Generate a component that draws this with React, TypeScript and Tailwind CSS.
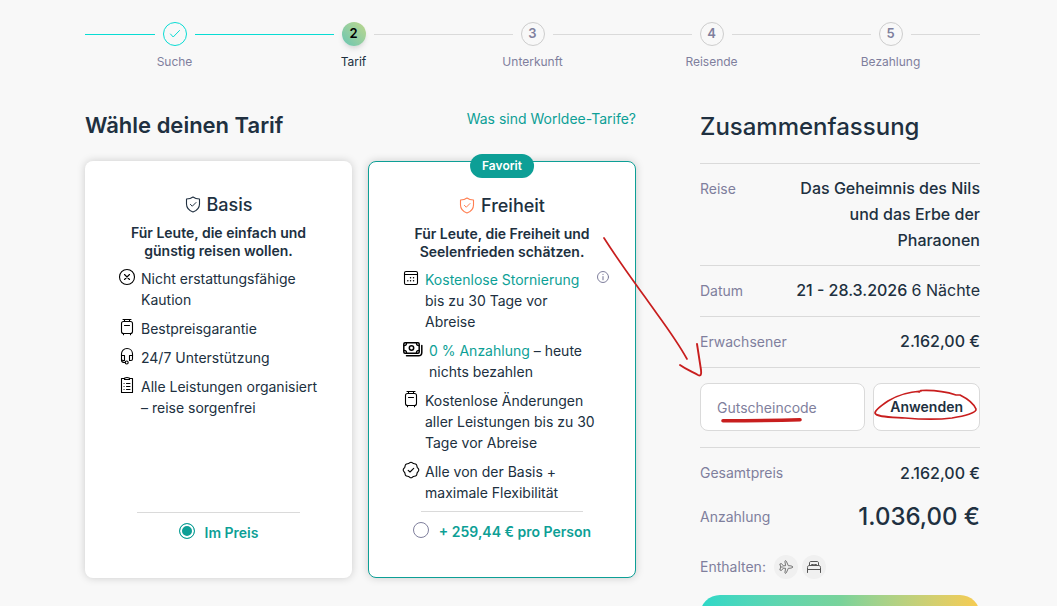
import { useState } from "react";
import type { ReactNode } from "react";

type IconProps = { children: ReactNode; className?: string; w?: number; h?: number };

function Icon({ children, className = "", w = 18, h = 18 }: IconProps) {
  return (
    <svg
      width={w}
      height={h}
      viewBox={`0 0 ${w} ${h}`}
      fill="none"
      stroke="currentColor"
      strokeWidth="1.1"
      strokeLinecap="round"
      strokeLinejoin="round"
      aria-hidden="true"
      className={`shrink-0 ${className}`}
    >
      {children}
    </svg>
  );
}

const ShieldIcon = ({ className }: { className: string }) => (
  <Icon w={16} h={18} className={className}>
    <path d="M8 1C6.2 2.4 3.8 3 1.5 3V8C1.5 12.1 4.2 14.6 8 16C11.8 14.6 14.5 12.1 14.5 8V3C12.2 3 9.8 2.4 8 1Z" strokeWidth="1.1" />
    <path d="M5.4 8.4L7.3 10.2L11 6.5" strokeWidth="1" />
  </Icon>
);

const CircleXIcon = () => (
  <Icon>
    <circle cx="9" cy="9" r="7.5" />
    <path d="M6.5 6.5L11.5 11.5M11.5 6.5L6.5 11.5" />
  </Icon>
);

const SuitcaseIcon = () => (
  <Icon>
    <path d="M5 1.5H13M6.5 1.5V3.5M11.5 1.5V3.5" />
    <rect x="3.5" y="3.5" width="11" height="12" rx="2" />
    <path d="M6.5 7.5H11.5M5.5 15.5V16.7M12.5 15.5V16.7" />
  </Icon>
);

const HeadsetIcon = () => (
  <Icon>
    <path d="M3.5 9V6.8C3.5 3.8 5.8 1.5 9 1.5S14.5 3.8 14.5 6.8V9" />
    <path d="M3.5 8.5H6.5V13.5H5C4 13.5 3.5 13 3.5 12ZM14.5 8.5H11.5V13.5H13C14 13.5 14.5 13 14.5 12Z" />
    <path d="M3.5 12V13.5C3.5 15 4.5 15.5 7 15.5" />
    <circle cx="8.7" cy="15.5" r="1.5" />
  </Icon>
);

const ClipboardIcon = () => (
  <Icon>
    <path d="M6.5 2.5H3.5V16.5H14.5V2.5H11.5" />
    <path d="M6.5 3.5V2.5C6.5 1.5 7 1.5 9 1.5S11.5 1.5 11.5 2.5V3.5Z" />
    <path d="M8.5 7.5H12M8.5 10.5H12M8.5 13.5H12M6 7.5H6.1M6 10.5H6.1M6 13.5H6.1" />
  </Icon>
);

const CalendarIcon = () => (
  <Icon>
    <rect x="2.5" y="2.5" width="13" height="13" rx="1.5" />
    <path d="M2.5 5.5H15.5" />
    <path d="M8.5 8.8H8.6M11.5 8.8H11.6M5.8 11.8H5.9M8.5 11.8H8.6M11.5 11.8H11.6" strokeWidth="1.4" />
  </Icon>
);

const CashIcon = () => (
  <Icon w={22} h={18}>
    <rect x="1.8" y="2.8" width="15.400" height="10.400" rx="1.2" strokeWidth="1.5" />
    <circle cx="9.5" cy="8" r="2.2" strokeWidth="1.5" />
    <path d="M2 5.7C3.6 5.700 4.600 4.700 4.600 3M17 5.700C15.400 5.700 14.400 4.700 14.400 3M2 10.300C3.600 10.300 4.600 11.300 4.600 13M17 10.300C15.400 10.300 14.400 11.300 14.400 13" strokeWidth="1.2" />
    <path d="M4.500 15.800H16.500C18.800 15.800 19.800 14.800 19.800 12.500V5.500" strokeWidth="1.5" />
  </Icon>
);

const SealCheckIcon = () => (
  <Icon>
    <path d="M9 1.2C10.2 1.2 10.5 2.3 11.4 2.6C12.3 2.9 13.3 2.4 14.2 3.3C15.1 4.2 14.8 5.3 15.2 6.3C15.6 7.2 16.8 7.6 16.8 9S15.6 10.8 15.2 11.7C14.8 12.7 15.1 13.8 14.2 14.7C13.3 15.6 12.3 15.1 11.4 15.4C10.5 15.7 10.2 16.8 9 16.8S7.5 15.7 6.6 15.4C5.7 15.1 4.7 15.6 3.8 14.7C2.9 13.8 3.2 12.7 2.8 11.7C2.4 10.8 1.2 10.4 1.2 9S2.4 7.2 2.8 6.3C3.2 5.3 2.9 4.2 3.8 3.3C4.7 2.4 5.7 2.9 6.6 2.6C7.5 2.3 7.8 1.2 9 1.2Z" />
    <path d="M6.2 9.3L8 11L11.7 7.3" />
  </Icon>
);

const InfoIcon = () => (
  <Icon w={14} h={14}>
    <circle cx="7" cy="7" r="5.5" strokeWidth="1" />
    <path d="M7 6.5V9.8M7 4.3V4.4" />
  </Icon>
);

const PlaneIcon = () => (
  <Icon w={16} h={16} className="text-[#666]">
    <path
      strokeWidth="0.9"
      d="M14.5 8C14.5 7 13 6.7 10.3 6.7L8.3 2.2C8 1.5 6.8 1.5 6.9 2.4L7.6 6.7L5.3 6.8L3.5 4.6L1.8 5L2.8 8L1.8 11L3.5 11.4L5.3 9.2L7.6 9.3L6.9 13.6C6.8 14.5 8 14.5 8.3 13.8L10.3 9.3C13 9.3 14.5 9 14.5 8Z"
    />
    <path d="M3 8H5" strokeWidth="0.8" />
  </Icon>
);

const BedIcon = () => (
  <Icon w={16} h={16} className="text-[#555]">
    <path
      strokeWidth="1"
      d="M3.5 6.5V4C3.5 3 4 2.5 5 2.5H11C12 2.5 12.5 3 12.5 4V6.5M5.5 6.5V5.5H7.5V6.5M8.5 6.5V5.5H10.5V6.5M1.5 13.5V8.5C1.5 7.2 2.2 6.5 3.5 6.5H12.5C13.8 6.5 14.5 7.2 14.5 8.5V13.5M1.5 10.5H14.5"
    />
  </Icon>
);

const steps = ["Suche", "Tarif", "Unterkunft", "Reisende", "Bezahlung"];

function Stepper() {
  return (
    <ol className="grid grid-cols-5">
      {steps.map((label, i) => {
        const done = "h-px flex-1 bg-[#08dcd4]";
        const open = "h-px flex-1 bg-[#dadada]";
        return (
          <li key={label} className="flex flex-col items-center" aria-current={i === 1 ? "step" : undefined}>
            <div className="flex w-full items-center gap-2">
              <span className={i < 2 ? done : open} />
              {i === 0 && (
                <span className="flex size-6 items-center justify-center rounded-full border border-[#08dcd4] text-[#08dcd4]">
                  <Icon w={12} h={12}>
                    <path d="M1.5 6L4.2 9L10.5 2.5" strokeWidth="1" />
                  </Icon>
                </span>
              )}
              {i === 1 && (
                <span className="flex size-6 items-center justify-center rounded-full bg-linear-to-tr from-[#65c5b2] to-[#bdd78b] text-[13px] font-semibold text-black shadow-md">
                  2
                </span>
              )}
              {i > 1 && (
                <span className="flex size-6 items-center justify-center rounded-full border border-[#cdcdcd] text-[13px] font-semibold">
                  {i + 1}
                </span>
              )}
              <span className={i < 1 ? done : open} />
            </div>
            <span className={i === 1 ? "mt-[7px] text-xs leading-[18px] text-[#203040]" : "mt-[7px] text-xs leading-[18px]"}>
              {label}
            </span>
          </li>
        );
      })}
    </ol>
  );
}

type PlanProps = {
  id: string;
  name: string;
  tagline: string;
  price: string;
  featured?: boolean;
  checked: boolean;
  onSelect: () => void;
  children: ReactNode;
};

function Plan({ id, name, tagline, price, featured, checked, onSelect, children }: PlanProps) {
  return (
    <section
      className={
        featured
          ? "relative flex flex-col rounded-lg border border-[#0d9f96] bg-white px-[33px] pt-[30px] pb-[35px] shadow-[0_0_8px_rgba(0,0,0,0.18)]"
          : "relative flex flex-col rounded-lg bg-white px-[33px] pt-[30px] pb-[35px] shadow-[0_0_8px_rgba(0,0,0,0.18)]"
      }
    >
      {featured && (
        <span className="absolute -top-2 left-1/2 -translate-x-1/2 rounded-full bg-[#0d9f96] px-3 text-xs leading-6 font-semibold text-white">
          Favorit
        </span>
      )}
      <h3 className="flex items-center justify-center gap-1.5 text-lg leading-7 font-medium">
        <ShieldIcon className={featured ? "text-[#ff7e50]" : "text-[#203040]"} />
        {name}
      </h3>
      <p className="mt-[5px] text-center text-sm leading-[18px] font-semibold">{tagline}</p>
      <ul className="mt-2 flex flex-col gap-2 pb-2 text-sm leading-[21px]">{children}</ul>
      <hr className="mx-[19px] mt-auto border-[#dadada]" />
      <label htmlFor={id} className="mt-[9px] flex items-start justify-center gap-2.5 text-sm leading-[21px] font-semibold text-[#0d9f96]">
        <input
          id={id}
          type="radio"
          name="tarif"
          checked={checked}
          onChange={onSelect}
          className="mt-px size-4 shrink-0 appearance-none rounded-full border border-[#7f7f9d] bg-white checked:border-[#0d9f96] checked:bg-[#0d9f96] checked:shadow-[inset_0_0_0_2px_white]"
        />
        {price}
      </label>
    </section>
  );
}

function Feature({ icon, children, info }: { icon: ReactNode; children: ReactNode; info?: boolean }) {
  return (
    <li className={info ? "-mr-2 flex items-start gap-[5px]" : "flex items-start gap-[5px]"}>
      <span className="flex shrink-0 text-black">{icon}</span>
      <span className="flex-1">{children}</span>
      {info && (
        <button type="button" aria-label="Info" className="flex pt-px text-[#7f7f9d]">
          <InfoIcon />
        </button>
      )}
    </li>
  );
}

function Row({ label, children }: { label: string; children: ReactNode }) {
  return (
    <div className="flex items-baseline justify-between gap-4 border-t border-[#dadada] pt-[11px] pb-3 leading-[26px]">
      <dt className="text-sm leading-[26px]">{label}</dt>
      <dd className="max-w-[190px] text-right font-medium text-[#203040]">{children}</dd>
    </div>
  );
}

function Summary() {
  return (
    <aside>
      <h2 className="mb-[18px] text-2xl leading-9 font-medium text-[#203040]">Zusammenfassung</h2>
      <dl>
        <Row label="Reise">Das Geheimnis des Nils und das Erbe der Pharaonen</Row>
        <Row label="Datum">
          21 - 28.3.2026 <span className="font-normal">6 Nächte</span>
        </Row>
        <Row label="Erwachsener">2.162,00 €</Row>
      </dl>
      <form className="flex gap-2 border-y border-[#dadada] pt-[15px] pb-4" onSubmit={(e) => e.preventDefault()}>
        <input
          type="text"
          aria-label="Gutscheincode"
          placeholder="Gutscheincode"
          className="h-12 min-w-0 flex-1 rounded-lg border border-[#dadada] bg-white px-4 text-sm placeholder:text-[#7f7f9d]"
        />
        <button type="submit" className="h-12 rounded-lg border border-[#dadada] bg-white px-4 text-sm font-semibold text-[#203040]">
          Anwenden
        </button>
      </form>
      <dl className="pt-3 text-sm">
        <div className="flex items-center justify-between">
          <dt>Gesamtpreis</dt>
          <dd className="text-base leading-[26px] font-medium text-[#203040]">2.162,00 €</dd>
        </div>
        <div className="mt-[13px] flex items-center justify-between">
          <dt>Anzahlung</dt>
          <dd className="text-2xl leading-9 font-medium text-[#203040]">1.036,00 €</dd>
        </div>
      </dl>
      <div className="mt-5 flex items-center gap-1 text-sm">
        <span className="mr-1">Enthalten:</span>
        <span className="flex size-6 items-center justify-center rounded-full bg-[#f0f0f0]">
          <PlaneIcon />
        </span>
        <span className="flex size-6 items-center justify-center rounded-full bg-[#f0f0f0]">
          <BedIcon />
        </span>
      </div>
      <button
        type="button"
        aria-label="Weiter"
        className="mt-4 block h-10 w-full rounded-[20px] bg-linear-to-r from-[#2bd8c8] via-[#78d39b] to-[#f7cb50]"
      />
    </aside>
  );
}

function PenMarks() {
  return (
    <svg
      className="pointer-events-none absolute top-0 left-0"
      width="1057"
      height="606"
      viewBox="0 0 1057 606"
      fill="none"
      stroke="#c81e1e"
      strokeLinecap="round"
      strokeLinejoin="round"
      aria-hidden="true"
    >
      <path strokeWidth="1.7" d="M604 238C620 263 632 279 645 297C659 317 675 337 687 359" />
      <path strokeWidth="1.9" d="M680 365C687 370 693 372 698 375C701 376.500 701.500 374 701 370L697 344" />
      <path strokeWidth="3.6" d="M723 420.700C745 420.700 775 420.500 800 419.800" />
      <path
        strokeWidth="1.7"
        d="M921 391C907 392 896 396 888 401C882 405 875 410 875 413C876 417 889 417 905 418C922 419.500 940 419.500 952 418C964 416 977 413 976 409C973 402 966 398 960 395H956C944 391 932 390 921 390.500L919 392"
      />
    </svg>
  );
}

export default function App() {
  const [plan, setPlan] = useState("basis");
  return (
    <div className="relative min-h-screen bg-[#f8f8f8] pt-[22px] pr-[77px] pb-6 pl-[85px] font-['Inter',sans-serif] text-[#7f7f9d]">
      <Stepper />
      <div className="mt-[38px] flex items-start gap-16">
        <main className="min-w-0 flex-1 text-[#203040]">
          <div className="flex h-[52px] items-start justify-between">
            <h1 className="text-[22px] leading-8 font-semibold">Wähle deinen Tarif</h1>
            <a href="#tarife" className="text-sm leading-5 text-[#0d9f96]">
              Was sind Worldee-Tarife?
            </a>
          </div>
          <div className="grid grid-cols-[267fr_268fr] gap-4">
            <Plan
              id="basis"
              name="Basis"
              tagline="Für Leute, die einfach und günstig reisen wollen."
              price="Im Preis"
              checked={plan === "basis"}
              onSelect={() => setPlan("basis")}
            >
              <Feature icon={<CircleXIcon />}>Nicht erstattungsfähige Kaution</Feature>
              <Feature icon={<SuitcaseIcon />}>Bestpreisgarantie</Feature>
              <Feature icon={<HeadsetIcon />}>24/7 Unterstützung</Feature>
              <Feature icon={<ClipboardIcon />}>Alle Leistungen organisiert – reise sorgenfrei</Feature>
            </Plan>
            <Plan
              id="freiheit"
              name="Freiheit"
              tagline="Für Leute, die Freiheit und Seelenfrieden schätzen."
              price="+ 259,44 € pro Person"
              featured
              checked={plan === "freiheit"}
              onSelect={() => setPlan("freiheit")}
            >
              <Feature icon={<CalendarIcon />} info>
                <span className="text-[#0d9f96]">Kostenlose Stornierung</span> bis zu 30 Tage vor Abreise
              </Feature>
              <Feature icon={<CashIcon />}>
                <span className="text-[#0d9f96]">0 % Anzahlung</span> – heute nichts bezahlen
              </Feature>
              <Feature icon={<SuitcaseIcon />}>Kostenlose Änderungen aller Leistungen bis zu 30 Tage vor Abreise</Feature>
              <Feature icon={<SealCheckIcon />}>Alle von der Basis + maximale Flexibilität</Feature>
            </Plan>
          </div>
        </main>
        <div className="w-[280px] shrink-0">
          <Summary />
        </div>
      </div>
      <PenMarks />
    </div>
  );
}
